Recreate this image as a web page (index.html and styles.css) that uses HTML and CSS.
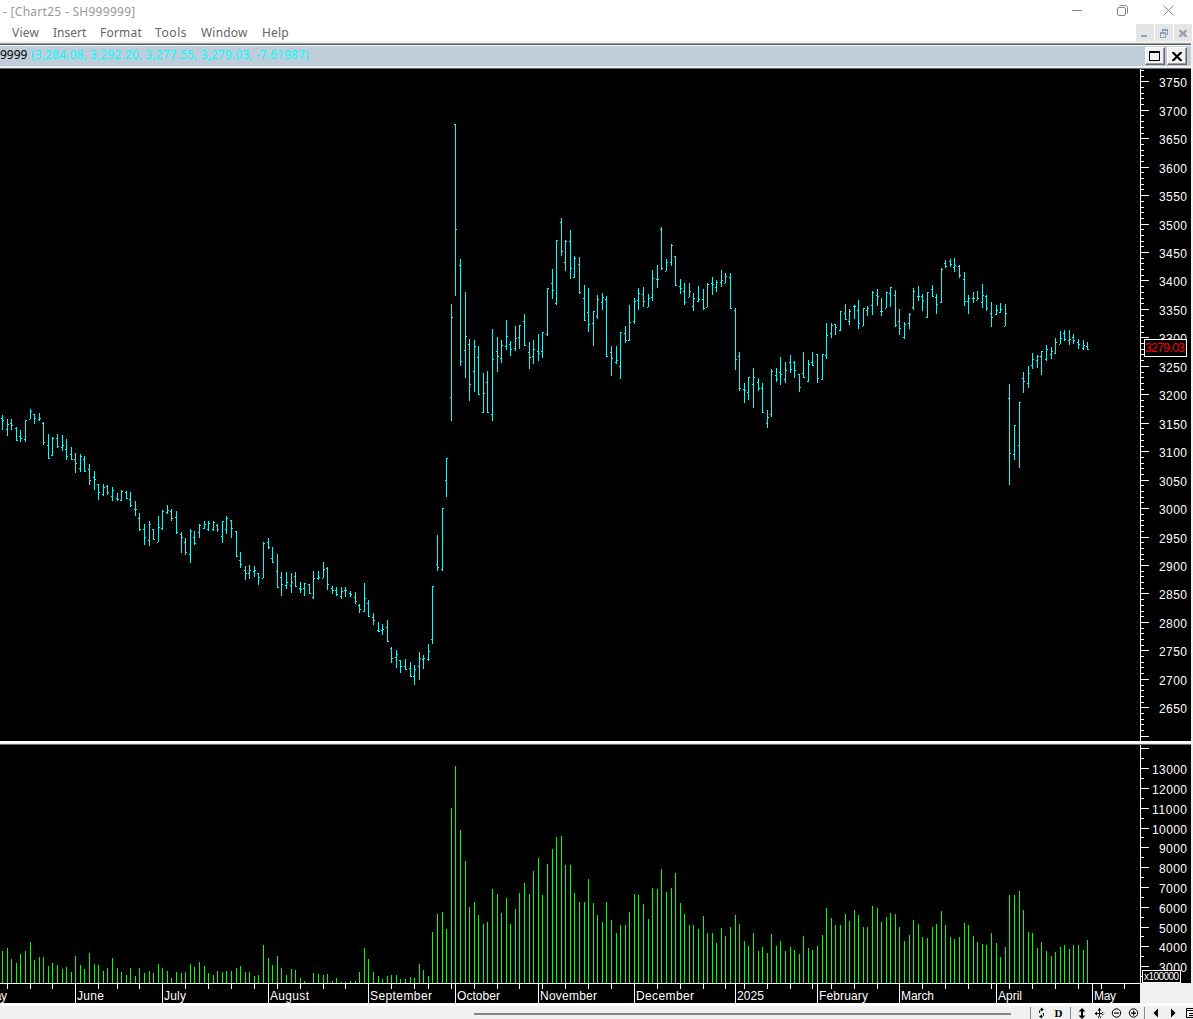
FILE: index.html
```html
<!DOCTYPE html>
<html lang="en">
<head>
  <meta charset="utf-8"/>
  <title>Chart25 - SH999999</title>
  <link rel="stylesheet" href="styles.css">
</head>
<body>
  <div class="app">
    <div class="title-bar">
      <span id="app-title" class="app-title">- [Chart25 - SH999999]</span>
      <div class="window-controls">
        <svg width="10" height="11" viewBox="0 0 10 11"><path d="M0 5.5H10"/></svg>
        <svg width="11" height="11" viewBox="0 0 11 11"><rect x="0.5" y="2.5" width="8" height="8" rx="1.5"/><path d="M2.5 .5H8Q10.5 .5 10.5 3V8.5"/></svg>
        <svg width="11" height="11" viewBox="0 0 11 11"><path d="M.5 .5L10.5 10.5M10.5 .5L.5 10.5"/></svg>
      </div>
    </div>
    <div class="menu-bar">
      <ul class="menu">
        <li class="w-view">View</li>
        <li class="w-insert">Insert</li>
        <li class="w-format">Format</li>
        <li class="w-tools">Tools</li>
        <li class="w-window">Window</li>
        <li>Help</li>
      </ul>
      <div class="mdi-controls">
        <span><svg width="18" height="18" viewBox="0 0 18 18"><path d="M5 11h6v2H5z"/></svg></span>
        <span><svg width="18" height="18" viewBox="0 0 18 18"><path d="M7 5h6v6h-2v-1h1V7H8v1H7zM5 8h6v6H5zM6 10v3h4v-3z" fill-rule="evenodd"/></svg></span>
        <span><svg width="18" height="18" viewBox="0 0 18 18"><path d="M5 6h2l2 2 2-2h2v1l-2 2.500 2 2.500v1h-2l-2-2-2 2H5v-1l2-2.500L5 7z"/></svg></span>
      </div>
    </div>
    <div class="chart-head">
      <div class="quote"><span class="symbol">9999</span><span class="values">(3,284.08, 3,292.20, 3,277.55, 3,279.03, -7.61987)</span></div>
      <div class="chart-controls">
        <span><svg width="18" height="16" viewBox="0 0 18 16"><path d="M3 3h11v10H3zM4 5v7h9V5z" fill-rule="evenodd"/></svg></span>
        <span><svg width="18" height="16" viewBox="0 0 18 16"><path d="M4 4h2l3 3 3-3h2v1l-3.500 3.500L14 12v1h-2L9 10l-3 3H4v-1l3.500-3.500L4 5z"/></svg></span>
      </div>
    </div>
    <svg id="price-chart" class="panel" width="1191" height="672" viewBox="0 69 1191 672"></svg>
    <div class="splitter"></div>
    <svg id="volume-chart" class="panel" width="1191" height="258" viewBox="0 745 1191 258"></svg>
    <div class="status-bar">
      <div class="scroll-thumb"></div>
      <svg class="tools" width="169" height="16" viewBox="1024 1003 169 16">
        <path class="sep" d="M1030 1007h1v12h-1zM1070 1007h1v12h-1zM1144 1007h1v12h-1z"/>
        <path class="stroke" d="M1041 1009.500H1040.500Q1039.500 1009.500 1039.500 1013M1041 1016.500H1042.500Q1043.500 1016.500 1043.500 1013"/>
        <path d="M1041 1007.500l3 2-3 2zM1042 1014.500l-3 2 3 2z"/>
        <text class="tool-letter" x="1054.500" y="1017">D</text>
        <path d="M1082 1008l3.500 3.500h-2.500v4h2.500l-3.500 3.500-3.500-3.500h2.500v-4h-2.500z"/>
        <path d="M1099 1008h1v5h4v1h-4v5h-1v-5h-4v-1h4zM1099.500 1008l2 2.500h-4zM1099.500 1019l2-2.500h-4zM1094.500 1013.500l2.500-2v4zM1104.500 1013.500l-2.500-2v4z"/>
        <circle class="stroke" cx="1116.500" cy="1013" r="4.200"/><path d="M1114 1012.500h5v1.200h-5z"/>
        <circle class="stroke" cx="1133.500" cy="1013" r="4.200"/><path d="M1131 1012.500h5v1.200h-5zM1133 1010.500h1.200v5h-1.200z"/>
        <path d="M1158 1008.500v9l-4.500-4.500zM1171 1008.500v9l4.500-4.500z"/>
        <path class="stroke" d="M1193 1008.500H1186.500V1017.500H1193M1187 1010.500H1193M1189 1013.500H1193M1189 1015.500H1193"/>
      </svg>
    </div>
  </div>
  <script src="chart.js"></script>
</body>
</html>
```
FILE: styles.css
```css
body {
  margin: 0;
  overflow: hidden;
  background: #f0f0f0;
  font-family: "Noto Sans", sans-serif;
}

.app {
  display: flex;
  flex-flow: column;
  width: 1193px;
  height: 1019px;
}

.title-bar {
  display: flex;
  justify-content: space-between;
  height: 24px;
  background: #fff;
}

.app-title {
  padding-left: 3px;
  color: #999;
  font-size: 12px;
  line-height: 24px;
  letter-spacing: .28px;
  white-space: nowrap;
}

.window-controls {
  display: flex;
  gap: 35px;
  padding: 5px 19px 0 0;
  fill: none;
  stroke: #888;
}

.menu-bar {
  display: flex;
  justify-content: space-between;
  height: 17px;
  background: #fff;
}

.menu {
  display: flex;
  margin: 0;
  padding: 0 0 0 12px;
  list-style: none;
  color: #666;
  font-size: 12px;
  line-height: 17px;
  letter-spacing: .2px;
}

.w-view { width: 41px; }
.w-insert { width: 47px; letter-spacing: 0; }
.w-format { width: 55px; }
.w-tools { width: 46px; letter-spacing: .6px; }
.w-window { width: 61px; }

.mdi-controls {
  display: flex;
  gap: 1px;
  padding-right: 1px;
}

.mdi-controls span {
  width: 18px;
  height: 18px;
  background: #e5e5e5;
  fill: #90a0b3;
}

.chart-head {
  display: flex;
  justify-content: space-between;
  box-sizing: border-box;
  width: 1191px;
  height: 28px;
  border-top: 2px solid #f0f0f0;
  border-bottom: 1px solid #696969;
  background: #bfcddb;
  /* bevel inside the frame */
  box-shadow: inset 0 1px #a0a0a0, inset 0 2px #555, inset 0 3px #fff, inset 0 -2px #f0f0f0;
}

.quote {
  font-size: 12px;
  line-height: 24px;
  white-space: nowrap;
}

.symbol {
  display: inline-block;
  width: 31px;
}

.values {
  color: #0ff;
  letter-spacing: .13px;
}

.chart-controls {
  display: flex;
  gap: 2px;
  padding: 4px 4px 0 0;
}

.chart-controls span {
  box-sizing: border-box;
  width: 20px;
  height: 18px;
  border: 1px solid #fff;
  border-right: 1px solid #696969;
  border-bottom: 1px solid #696969;
  box-shadow: inset -1px -1px #a0a0a0;
  background: #f0f0f0;
}

.chart-controls svg,
.mdi-controls svg {
  display: block;
}

.panel {
  flex: none;
  display: block;
  background: #000;
  border-right: 2px solid #f0f0f0;
}

.splitter {
  flex: none;
  box-sizing: border-box;
  width: 1191px;
  height: 4px;
  border-top: 2px solid #fff;
  border-bottom: 1px solid #696969;
  background: #f0f0f0;
}

.status-bar {
  display: flex;
  align-items: flex-start;
  justify-content: space-between;
  box-sizing: border-box;
  height: 16px;
  padding-left: 474px;
  box-shadow: inset 0 3px #fff;
}

.scroll-thumb {
  width: 537px;
  height: 2px;
  margin-top: 10px;
  background: #858585;
}

.bars {
  fill: #0ff;
}

.volume {
  fill: #0f0;
}

.axis {
  fill: #fff;
}

.bars,
.volume,
.axis,
.blank,
.box {
  shape-rendering: crispEdges;
}

.blank {
  fill: #f0f0f0;
}

.label {
  fill: #fff;
  font: 12px "Liberation Sans", sans-serif;
}

.small {
  font-size: 10px;
}

.box {
  fill: #000;
  stroke: #fff;
}

.last-price {
  fill: #f00;
}

.tools .sep {
  fill: #888;
}

.tools .stroke {
  fill: none;
  stroke: #000;
}

.tool-letter {
  font: bold 11px "Liberation Serif", serif;
}
```
FILE: chart.js
```javascript
// x, open, high, low, close, volume (y positions on the chart canvas)
var bars = [
  [2,418,415,430,420,951], [7,429,419,436,424,948], [11,423,419,430,425,959], [16,428,427,441,440,963],
  [20,436,430,442,438,954], [25,439,420,442,420,951], [30,419,409,419,411,942], [34,414,414,424,418,960],
  [39,419,413,421,418,957], [43,423,422,445,442,957], [48,445,434,459,458,966], [52,455,437,456,438,963],
  [57,438,434,448,446,965], [62,447,435,451,445,969], [66,449,439,460,456,967], [71,454,447,460,459,972],
  [75,459,453,473,463,956], [80,468,454,472,456,965], [84,459,456,472,471,969], [89,469,464,485,480,953],
  [94,477,471,490,479,964], [98,484,484,500,492,965], [103,494,484,496,487,971], [107,486,485,495,492,968],
  [112,496,487,501,490,958], [117,498,493,501,499,968], [121,500,490,501,491,972], [126,492,491,499,498,975],
  [130,499,492,507,505,968], [135,509,501,516,509,976], [139,518,513,531,529,968], [144,529,524,545,537,973],
  [149,540,521,546,524,971], [153,529,529,540,539,973], [158,542,516,542,527,964], [162,528,510,530,511,968],
  [167,512,505,514,510,971], [171,511,509,521,518,978], [176,517,511,534,532,972], [181,534,532,553,537,973],
  [185,542,538,555,552,972], [190,554,529,563,531,964], [194,537,531,545,543,967], [199,532,524,538,525,962],
  [204,528,521,529,524,966], [208,529,521,531,523,973], [213,529,521,531,522,975], [217,525,524,532,529,971],
  [222,536,521,543,521,972], [226,529,516,534,518,971], [231,520,520,538,528,971], [236,531,531,557,556,968],
  [240,560,552,568,564,966], [245,570,566,580,573,972], [249,573,565,579,570,972], [254,571,566,577,570,976],
  [258,573,573,585,577,975], [263,578,542,578,543,945], [268,542,538,549,547,958], [272,558,547,563,562,965],
  [277,571,554,588,587,956], [281,577,572,596,584,968], [286,585,572,589,582,975], [291,585,573,593,582,969],
  [295,576,572,587,586,970], [300,588,582,593,589,978], [304,588,583,596,583,981], [309,584,584,594,593,983],
  [313,597,571,599,578,973], [318,578,571,580,577,974], [323,578,562,578,569,975], [327,568,567,590,584,974],
  [332,588,586,594,590,981], [336,590,587,596,594,978], [341,596,587,599,591,982], [345,590,587,597,590,982],
  [350,593,591,597,594,981], [355,597,592,604,601,981], [359,605,604,613,609,972], [364,611,583,612,598,948],
  [368,603,600,617,616,959], [373,617,613,625,620,972], [378,630,622,632,631,976], [382,630,624,635,629,979],
  [387,627,620,642,641,976], [391,648,647,663,658,975], [396,657,650,668,654,975], [400,660,660,673,666,979],
  [405,666,659,670,669,979], [410,668,662,677,676,977], [414,676,665,685,669,978], [419,666,652,680,658,964],
  [423,659,655,669,658,970], [428,659,644,661,651,976], [432,639,586,644,586,932], [437,564,535,571,567,914],
  [442,569,508,571,508,912], [446,480,458,497,458,929], [451,397,304,421,317,808], [455,124,124,296,229,766],
  [460,265,259,366,361,830], [465,350,292,378,336,861], [469,344,339,401,384,907], [474,371,340,392,346,902],
  [478,357,346,395,394,915], [483,412,373,413,393,924], [487,382,371,413,412,922], [492,414,329,421,359,889],
  [497,351,337,372,356,894], [501,358,340,363,345,913], [506,346,320,350,336,898], [510,344,341,356,349,924],
  [515,348,326,351,338,909], [519,337,325,349,325,893], [524,321,314,346,345,883], [529,352,342,369,357,894],
  [533,356,340,364,349,871], [538,351,334,361,353,858], [542,351,332,358,332,895], [547,334,288,336,288,864],
  [552,283,269,299,290,849], [556,303,240,305,240,837], [561,222,218,256,251,836], [565,262,240,271,241,865],
  [570,241,230,279,268,865], [574,277,256,278,258,893], [579,264,257,294,292,902], [584,298,285,321,320,902],
  [588,312,288,332,324,879], [593,323,311,346,311,903], [597,316,295,319,299,915], [602,302,293,310,297,922],
  [606,299,296,357,356,902], [611,352,346,376,358,920], [616,362,346,364,360,933], [620,366,332,379,332,925],
  [625,333,326,343,340,925], [629,340,305,341,322,912], [634,321,298,324,301,894], [638,300,288,310,293,895],
  [643,294,287,307,301,904], [648,307,294,307,298,919], [652,297,270,301,278,888], [657,279,265,288,279,889],
  [661,229,227,270,268,869], [666,271,259,271,262,892], [671,262,244,266,245,888], [675,256,256,286,285,873],
  [680,286,279,294,288,903], [684,291,283,305,302,914], [689,297,283,297,291,925], [693,306,293,311,298,925],
  [698,301,286,302,299,929], [703,299,289,310,308,916], [707,307,283,307,284,933], [712,283,277,295,284,933],
  [716,287,280,292,282,943], [721,282,270,287,280,928], [725,283,273,283,276,936], [730,277,273,309,308,927],
  [735,310,308,370,359,915], [739,356,352,391,388,924], [744,389,383,403,390,941], [748,392,377,400,377,946],
  [753,384,368,408,377,933], [758,382,378,391,388,951], [762,388,383,413,412,947], [767,423,410,428,417,953],
  [771,414,369,417,371,934], [776,375,368,382,379,946], [780,372,357,385,374,941], [785,379,362,383,370,951],
  [790,362,355,373,369,947], [794,362,361,378,370,950], [799,374,374,392,387,954], [803,373,352,378,377,936],
  [808,381,360,382,364,948], [812,362,352,366,365,950], [817,354,354,383,378,946], [822,379,354,380,354,935],
  [826,355,323,359,335,908], [831,333,323,338,325,918], [835,324,324,335,327,925], [840,330,311,331,311,925],
  [845,313,304,320,319,914], [849,321,309,325,311,921], [854,306,305,319,306,910], [858,310,300,329,323,915],
  [863,326,308,326,308,927], [867,310,306,316,308,927], [872,305,291,315,292,906], [877,295,289,306,296,908],
  [881,311,298,316,311,922], [886,308,292,308,292,917], [890,293,287,307,287,913], [895,295,290,327,325,914],
  [899,321,309,335,328,927], [904,337,322,339,324,941], [909,323,313,329,314,935], [913,307,288,310,291,920],
  [918,296,286,301,296,924], [922,296,294,311,300,937], [927,317,292,318,292,938], [932,289,285,297,296,927],
  [936,297,294,314,304,924], [941,302,268,303,269,911], [945,263,260,268,266,925], [950,261,259,267,264,937],
  [954,267,258,272,265,939], [959,266,265,278,275,937], [964,279,272,306,301,923], [968,301,295,314,298,925],
  [973,298,292,303,298,936], [977,300,291,300,298,942], [982,302,284,308,295,944], [986,296,295,311,308,945],
  [991,313,302,327,317,933], [996,314,305,315,310,943], [1000,312,303,313,309,957], [1005,326,304,326,313,947],
  [1009,398,384,485,453,895], [1014,454,425,460,425,895], [1019,445,402,468,402,891], [1023,378,372,393,381,910],
  [1028,383,366,388,373,932], [1032,365,353,369,359,933], [1037,360,355,368,356,948], [1041,356,351,375,351,942],
  [1046,359,345,361,349,951], [1051,354,347,359,351,956], [1055,353,338,354,342,952], [1060,344,331,344,338,947],
  [1064,333,330,341,339,945], [1069,340,330,345,339,949], [1073,337,334,344,340,945], [1078,342,339,349,344,945],
  [1083,348,340,350,345,950], [1087,346,342,350,349,940]
];

// x of the month line, label, label width
var months = [
  [-17, "May", 22], [75, "June", 27], [162, "July", 22], [268, "August", 39], [368, "September", 62],
  [455, "October", 43], [538, "November", 57], [634, "December", 58], [735, "2025", 27],
  [817, "February", 49], [899, "March", 33], [996, "April", 24], [1092, "May", 22]
];

var weeks = [7, 30, 52, 98, 117, 139, 185, 208, 231, 254, 277, 300, 323, 345, 391, 414, 428, 451, 474,
  497, 519, 542, 565, 588, 611, 657, 680, 703, 725, 744, 767, 790, 812, 831, 854, 877, 922, 945, 968,
  991, 1009, 1032, 1055, 1078, 1101, 1124];

var BASE = 983;   // bottom of the volume panel
var AXIS = 1140;  // x of the scale line

var price = document.getElementById( "price-chart" );
var volume = document.getElementById( "volume-chart" );

function add( parent, name, attrs, text ) {
    var el = document.createElementNS( "http://www.w3.org/2000/svg", name );
    for ( var key in attrs ) {
        el.setAttribute( key, attrs[key] );
    }
    if ( text ) {
        el.textContent = text;
    }
    parent.appendChild( el );
}

function rect( x, y, w, h ) {
    return "M" + x + " " + y + "h" + w + "v" + h + "h" + ( -w ) + "z";
}

function label( parent, x, y, width, text, extra ) {
    add( parent, "text", { "class": "label " + ( extra || "" ), x: x, y: y, textLength: width }, text );
}

function drawBars() {
    var ohlc = "", vol = "";
    for ( var i = 0; i < bars.length; i++ ) {
        var b = bars[i];
        ohlc += rect( b[0], b[2], 1, b[3] - b[2] ) + rect( b[0] - 1, b[1], 1, 1 ) + rect( b[0] + 1, b[4], 1, 1 );
        vol += rect( b[0], b[5], 1, BASE - b[5] );
    }
    add( price, "path", { "class": "bars", d: ohlc } );
    add( volume, "path", { "class": "volume", d: vol } );
}

function drawPriceScale() {
    var d = rect( AXIS, 69, 1, 672 );
    for ( var p = 3770; p >= 2600; p -= 10 ) {
        var y = Math.floor( 81.8 + ( 3750 - p ) * 0.5691 );
        var major = p % 50 === 0;
        d += rect( AXIS + 1, y, major ? 8 : 3, 1 );
        if ( major && p >= 2650 ) {
            label( price, 1159, y + 6, 28, String( p ) );
        }
    }
    add( price, "path", { "class": "axis", d: d } );
    add( price, "rect", { "class": "box", x: 1144.5, y: 339.5, width: 42, height: 17 } );
    label( price, 1145, 352, 40, "3279.03", "last-price" );
}

function drawVolumeScale() {
    var d = rect( AXIS, 745, 1, BASE - 745 );
    for ( var v = 14000; v >= 2500; v -= 500 ) {
        var y = Math.floor( 768.65 + ( 13000 - v ) * 0.0198 );
        var major = v % 1000 === 0;
        d += rect( AXIS + 1, y, major ? 8 : 3, 1 );
        if ( major && v >= 3000 && v <= 13000 ) {
            var w = v >= 10000 ? 35 : 28;
            label( volume, 1187 - w, y + 6, w, String( v ) );
        }
    }
    add( volume, "path", { "class": "axis", d: d } );
    add( volume, "rect", { "class": "box", x: 1142.5, y: 970.5, width: 38, height: 12 } );
    label( volume, 1144, 980, 35, "x100000", "small" );
}

function drawDates() {
    var d = rect( 0, BASE, AXIS + 1, 1 );
    add( volume, "rect", { "class": "blank", x: AXIS, y: BASE, width: 51, height: 20 } );
    for ( var i = 0; i < months.length; i++ ) {
        d += rect( months[i][0], BASE, 1, 20 );
        label( volume, months[i][0] + 2, 1000, months[i][2], months[i][1] );
    }
    for ( var j = 0; j < weeks.length; j++ ) {
        d += rect( weeks[j], BASE, 1, 6 );
    }
    add( volume, "path", { "class": "axis", d: d } );
}

drawBars();
drawPriceScale();
drawVolumeScale();
drawDates();
```
